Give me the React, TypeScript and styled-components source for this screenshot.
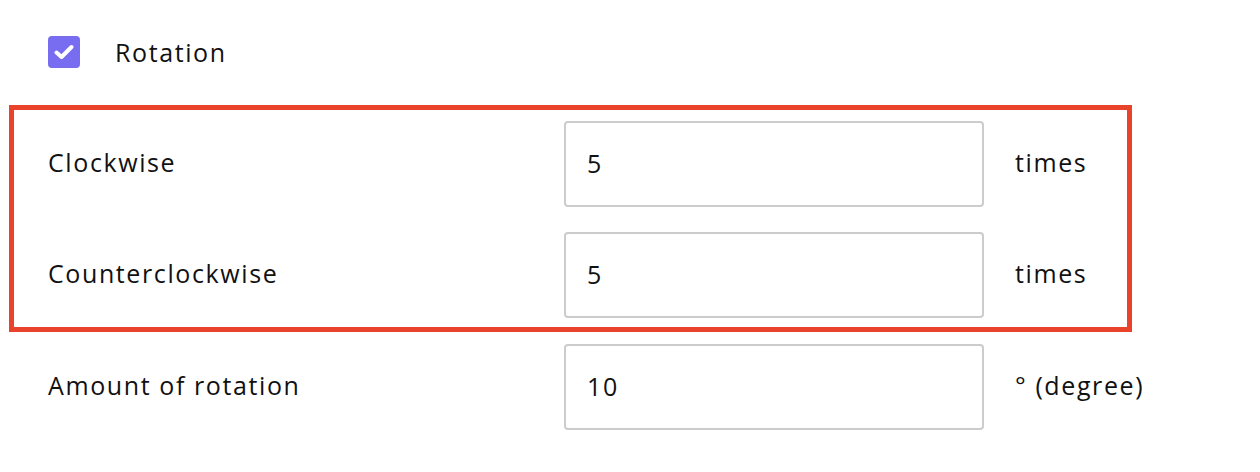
import React, { useState } from 'react'
import styled, { createGlobalStyle } from 'styled-components'

const colors = {
  text: '#111111',
  purple: '#786cf0',
  red: '#e9432b',
  border: '#cccccc',
}

const GlobalStyle = createGlobalStyle`
  body {
    margin: 0;
    background: #ffffff;
    font-family: 'Open Sans', 'Noto Sans', sans-serif;
    font-size: 25px;
    letter-spacing: 1.6px;
    color: ${ colors.text };
  }
`

const Page = styled.div`
  width: 1260px;
  height: 472px;
  padding-top: 35px;
  box-sizing: border-box;
`

const CheckRow = styled.label`
  display: flex;
  align-items: center;
  gap: 35px;
  padding-left: 48px;
  cursor: pointer;
`

const Box = styled.span<{ $checked: boolean }>`
  width: 32px;
  height: 32px;
  border-radius: 4px;
  display: flex;
  align-items: center;
  justify-content: center;
  background-color: ${ p => p.$checked ? colors.purple : '#fff' };
  border: ${ p => p.$checked ? 'none' : `2px solid ${ colors.border }` };
  box-sizing: border-box;
`

const Highlight = styled.div`
  margin: 36px 0 12px 9px;
  width: 1123px;
  box-sizing: border-box;
  border: 5px solid ${ colors.red };
  padding: 11px 0 9px 34px;
  display: flex;
  flex-direction: column;
  gap: 25px;
`

const Row = styled.div<{ $indent?: boolean }>`
  display: grid;
  grid-template-columns: 516px 420px auto;
  align-items: center;
  padding-left: ${ p => p.$indent ? '48px' : '0' };
`

const Label = styled.span`
  margin-top: -4px;
`

const Unit = styled(Label)`
  margin-left: 31px;
`

const Input = styled.input`
  height: 86px;
  width: 420px;
  box-sizing: border-box;
  border: 2px solid ${ colors.border };
  border-radius: 4px;
  padding: 0 21px 3px;
  font-family: inherit;
  font-size: inherit;
  letter-spacing: inherit;
  color: ${ colors.text };
  outline: none;
`

type Field = {
  label: string,
  value: string,
  unit: string,
}

const Setting = ({ field, indent }: { field: Field, indent?: boolean }) => {
  const [value, setValue] = useState(field.value)
  return (
    <Row $indent={ indent }>
      <Label>{ field.label }</Label>
      <Input value={ value } onChange={ e => setValue(e.target.value) } />
      <Unit>{ field.unit }</Unit>
    </Row>
  )
}

const App = () => {
  const [checked, setChecked] = useState(true)

  return (
    <Page>
      <GlobalStyle />
      <CheckRow onClick={ () => setChecked(!checked) }>
        <Box $checked={ checked }>
          { checked && (
            <svg width="20" height="16" viewBox="0 0 20 16">
              <path d="M2.5 8.5 L7.5 13 L17.5 3" fill="none" stroke="#fff" strokeWidth="4" strokeLinecap="round" strokeLinejoin="round" />
            </svg>
          ) }
        </Box>
        Rotation
      </CheckRow>
      <Highlight>
        <Setting field={ { label: 'Clockwise', value: '5', unit: 'times' } } />
        <Setting field={ { label: 'Counterclockwise', value: '5', unit: 'times' } } />
      </Highlight>
      <Setting indent field={ { label: 'Amount of rotation', value: '10', unit: '° (degree)' } } />
    </Page>
  )
}

export default App
